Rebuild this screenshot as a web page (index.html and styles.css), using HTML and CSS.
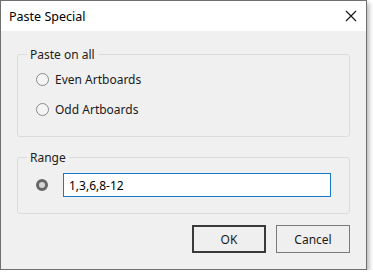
FILE: index.html
```html
<!DOCTYPE html>
<html lang="en">
<head>
    <meta charset="UTF-8">
    <title>Paste Special</title>
    <link rel="stylesheet" href="styles.css">
</head>
<body>
    <div class="window">
        <div class="titlebar">
            <span class="title">Paste Special</span>
            <svg class="close" width="12" height="12" viewBox="0 0 12 12">
                <path d="M1 1 L11 11 M11 1 L1 11" stroke="#111" stroke-width="1.1" fill="none"/>
            </svg>
        </div>

        <div class="content">
            <fieldset class="group group-paste">
                <legend>Paste on all</legend>
                <label class="row">
                    <span class="radio"></span>
                    <span>Even Artboards</span>
                </label>
                <label class="row">
                    <span class="radio"></span>
                    <span>Odd Artboards</span>
                </label>
            </fieldset>

            <fieldset class="group group-range">
                <legend>Range</legend>
                <div class="row">
                    <span class="radio checked"></span>
                    <input type="text" class="range-input" value="1,3,6,8-12">
                </div>
            </fieldset>

            <div class="buttons">
                <button class="btn btn-default">OK</button>
                <button class="btn">Cancel</button>
            </div>
        </div>
    </div>
</body>
</html>
```

FILE: styles.css
```css
body {
    margin: 0;
    padding: 0;
    background-color: #fff;
    font-family: "Noto Sans", "Open Sans", Arial, sans-serif;
    font-size: 12px;
    color: #1a1a1a;
}

.window {
    width: 367px;
    height: 270px;
    box-sizing: border-box;
    border: 1px solid #6f6f6f;
    background-color: #f0f0f0;
    box-shadow: 2px 3px 5px rgba(0, 0, 0, 0.3);
    display: flex;
    flex-direction: column;
}

.titlebar {
    height: 30px;
    background-color: #fff;
    display: flex;
    align-items: center;
    justify-content: space-between;
    padding: 0 8px 0 8px;
}

.title {
    font-size: 12.5px;
    color: #000;
}

.close {
    margin-right: 1px;
}

.content {
    padding: 0 16px;
    display: flex;
    flex-direction: column;
}

.group {
    margin: 0;
    border: 1px solid #dcdcdc;
    border-radius: 3px;
    padding: 0 0 0 9px;
}

.group legend {
    padding: 0 3px;
    color: #222;
}

.group-paste {
    margin-top: 15px;
    padding-bottom: 18px;
}

.group-range {
    margin-top: 12px;
    padding-bottom: 16px;
}

.row {
    display: flex;
    align-items: center;
    gap: 6px;
    margin-left: 9px;
    height: 18px;
}

.group-paste .row {
    margin-top: 12px;
}

.group-paste .row:first-of-type {
    margin-top: 7px;
}

.group-range .row {
    height: 24px;
    margin-top: 7px;
    gap: 15px;
}

.radio {
    width: 11px;
    height: 11px;
    border: 1px solid #8a8a8a;
    border-radius: 50%;
    background-color: #f4f4f4;
    flex-shrink: 0;
}

.radio.checked {
    width: 6px;
    height: 6px;
    border: 3px solid #676767;
    background-color: #d6d6d6;
}

.range-input {
    width: 268px;
    height: 24px;
    box-sizing: border-box;
    border: 1px solid #1979ca;
    padding: 0 5px;
    font-family: inherit;
    font-size: 12px;
    color: #000;
    outline: none;
}

.buttons {
    display: flex;
    justify-content: flex-end;
    gap: 10px;
    margin-top: 11px;
}

.btn {
    width: 74px;
    height: 28px;
    box-sizing: border-box;
    border: 1px solid #7a7a7a;
    background-color: #efefef;
    font-family: inherit;
    font-size: 12px;
    color: #1a1a1a;
    padding: 0;
}

.btn-default {
    border: 2px solid #3a3a3a;
}
```
